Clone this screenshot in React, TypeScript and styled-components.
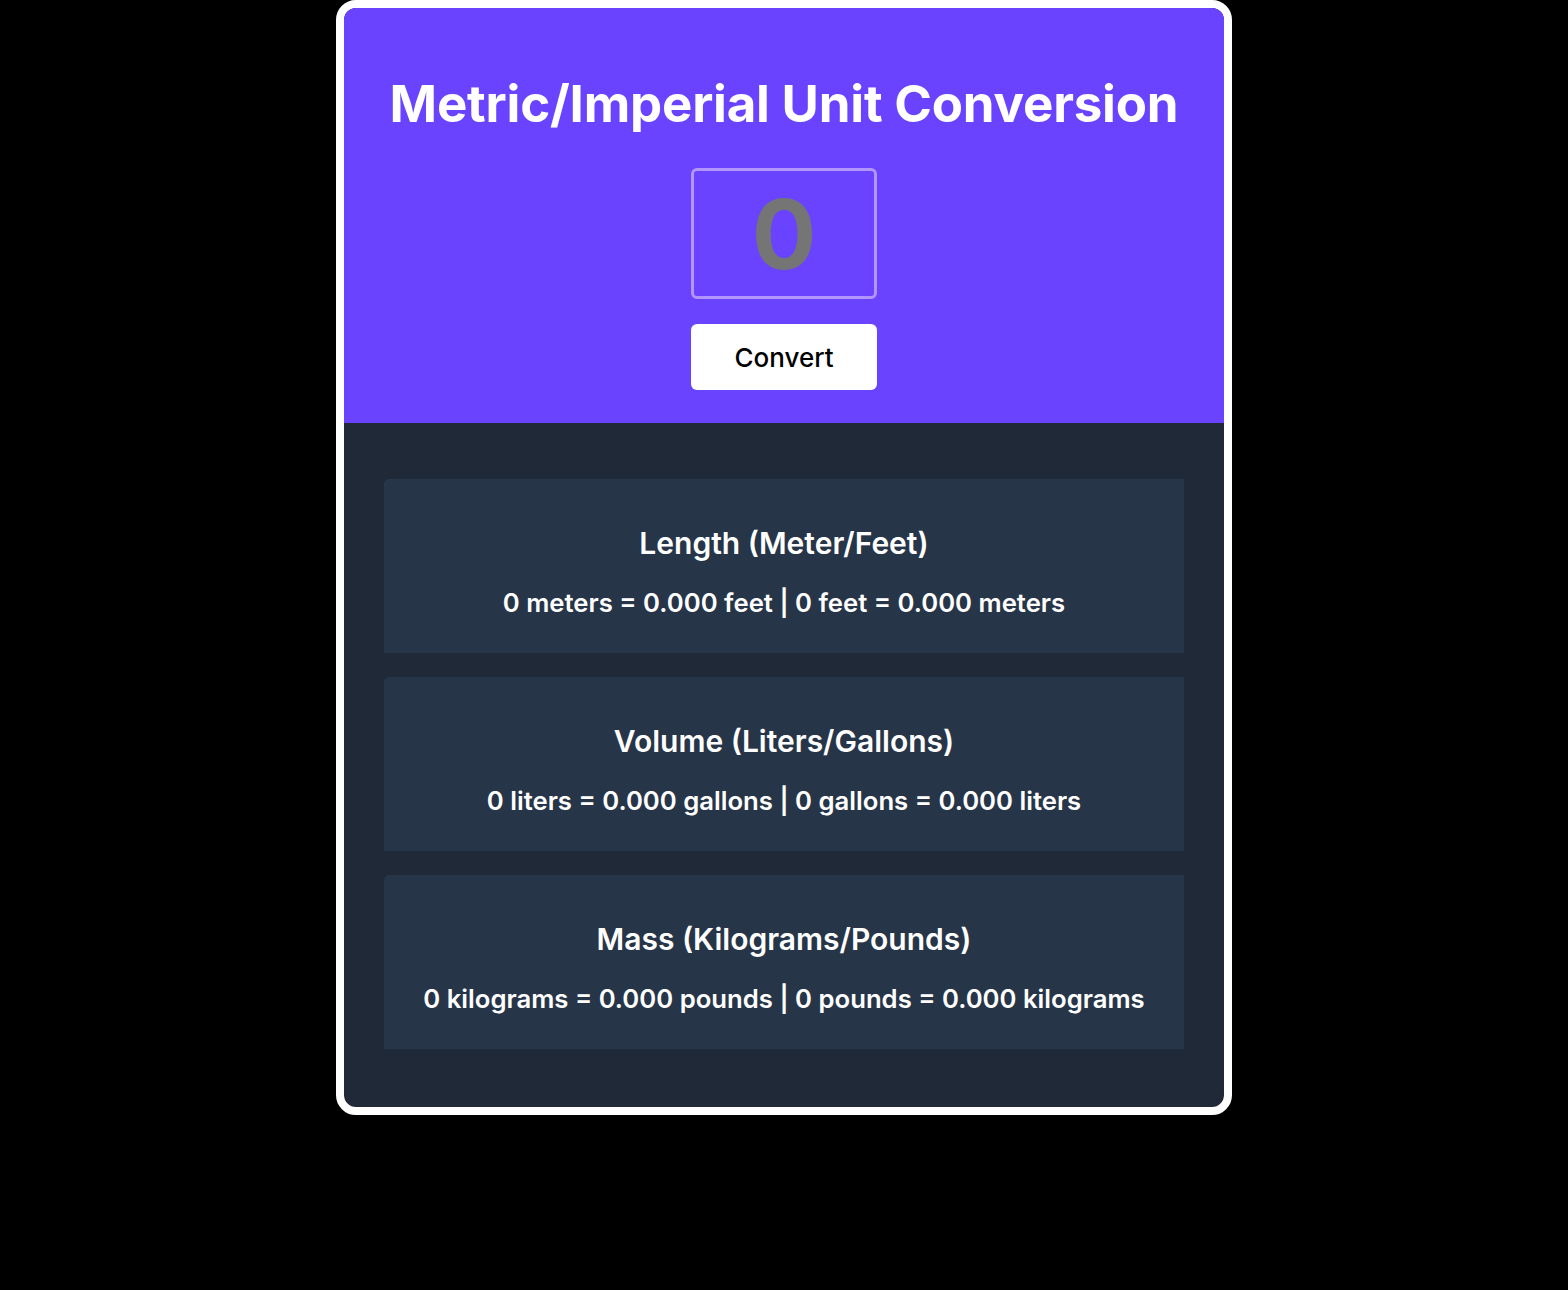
import React from "react";
import styled, { createGlobalStyle } from "styled-components";

const Global = createGlobalStyle`
  html, body { margin: 0; padding: 0; background: #000; }
  body { font-family: Inter, "Noto Sans", sans-serif; }
`;

const Page = styled.div`
  display: flex;
  justify-content: center;
`;

const Card = styled.main`
  width: 880px;
  border: 8px solid #ffffff;
  border-radius: 20px;
  overflow: hidden;
  background: #1f2937;
`;

const Header = styled.header`
  background: #6943ff;
  display: flex;
  flex-direction: column;
  align-items: center;
  padding: 68px 0 33px;
`;

const Title = styled.h1`
  margin: 0;
  color: #ffffff;
  font-size: 51px;
  font-weight: 700;
  line-height: 56px;
  letter-spacing: -0.2px;
`;

const NumberInput = styled.input`
  box-sizing: border-box;
  margin-top: 36px;
  width: 186px;
  height: 131px;
  padding: 0;
  border: 3px solid #b295ff;
  border-radius: 6px;
  background: transparent;
  color: #ffffff;
  text-align: center;
  font-family: Inter, sans-serif;
  font-size: 96px;
  font-weight: 700;
  outline: none;
  -moz-appearance: textfield;
  &::-webkit-outer-spin-button,
  &::-webkit-inner-spin-button {
    -webkit-appearance: none;
    margin: 0;
  }
  &::placeholder { color: #757575; opacity: 1; }
`;

const Button = styled.button`
  margin-top: 25px;
  width: 186px;
  height: 66px;
  border: none;
  border-radius: 6px;
  background: #ffffff;
  color: #000000;
  font-family: Inter, sans-serif;
  font-size: 26px;
  font-weight: 500;
  cursor: pointer;
`;

const Results = styled.section`
  display: flex;
  flex-direction: column;
  gap: 24px;
  padding: 56px 40px 58px;
`;

const Panel = styled.div`
  height: 174px;
  box-sizing: border-box;
  padding-top: 12px;
  background: #273549;
  border-radius: 5px 0 0 0;
  display: flex;
  flex-direction: column;
  align-items: center;
  justify-content: center;
  gap: 28px;
  color: #ffffff;
`;

const PanelTitle = styled.h2`
  margin: 0;
  font-size: 30px;
  font-weight: 600;
  line-height: 34px;
`;

const PanelText = styled.p`
  margin: 0;
  font-size: 25.7px;
  font-weight: 600;
  line-height: 30px;
`;

const rows = [
  { title: "Length (Meter/Feet)", text: "0 meters = 0.000 feet | 0 feet = 0.000 meters" },
  { title: "Volume (Liters/Gallons)", text: "0 liters = 0.000 gallons | 0 gallons = 0.000 liters" },
  { title: "Mass (Kilograms/Pounds)", text: "0 kilograms = 0.000 pounds | 0 pounds = 0.000 kilograms" },
];

export default function App() {
  return (
    <Page>
      <Global />
      <Card>
        <Header>
          <Title>Metric/Imperial Unit Conversion</Title>
          <NumberInput type="number" placeholder="0" />
          <Button>Convert</Button>
        </Header>
        <Results>
          {rows.map((r) => (
            <Panel key={r.title}>
              <PanelTitle>{r.title}</PanelTitle>
              <PanelText>{r.text}</PanelText>
            </Panel>
          ))}
        </Results>
      </Card>
    </Page>
  );
}
